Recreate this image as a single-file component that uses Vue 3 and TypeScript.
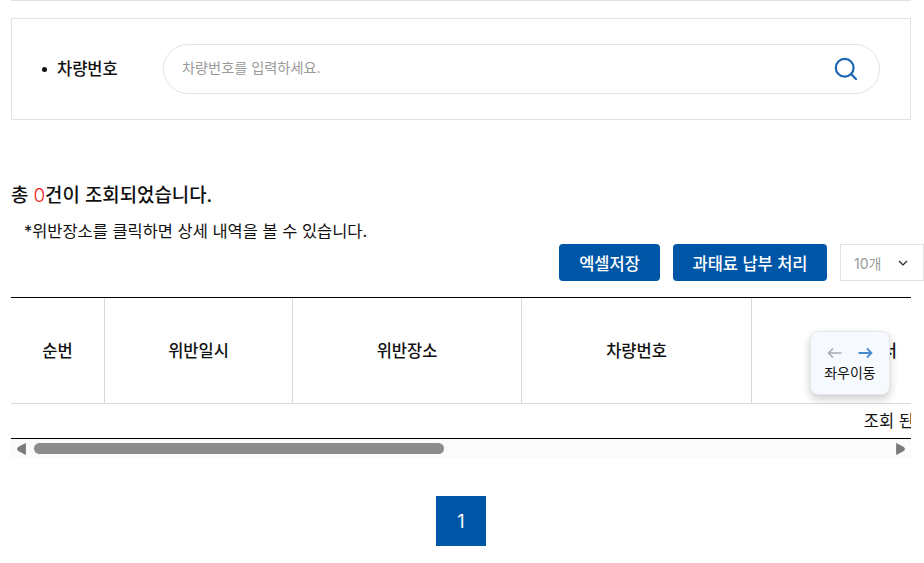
<script setup lang="ts">
const cols = [
  { label: '순번', w: 94 },
  { label: '위반일시', w: 188 },
  { label: '위반장소', w: 229 },
  { label: '차량번호', w: 230 },
  { label: '처리부서', w: 230 },
  { label: '위반내용', w: 230 },
  { label: '과태료', w: 230 },
  { label: '납부상태', w: 445 },
]
const total = cols.reduce((s, c) => s + c.w, 0)
</script>

<template>
  <div class="page">
    <div class="topline"></div>
    <section class="search">
      <div class="label"><span class="bullet"></span>차량번호</div>
      <div class="search-input">
        <span class="placeholder">차량번호를 입력하세요.</span>
        <svg class="search-icon" width="24" height="24" viewBox="0 0 24 24" fill="none">
          <circle cx="10.7" cy="10.7" r="8.9" stroke="#1b66b3" stroke-width="2.2" />
          <path d="M17.2 17.2L22 22" stroke="#1b66b3" stroke-width="2.2" stroke-linecap="round" />
        </svg>
      </div>
    </section>

    <h2 class="summary">총 <span class="count">0</span>건이 조회되었습니다.</h2>
    <p class="note">*위반장소를 클릭하면 상세 내역을 볼 수 있습니다.</p>

    <div class="actions">
      <button class="btn btn-excel">엑셀저장</button>
      <button class="btn btn-pay">과태료 납부 처리</button>
      <div class="select">
        <span>10개</span>
        <svg width="10" height="6" viewBox="0 0 10 6" fill="none">
          <path d="M1 1l4 4 4-4" stroke="#222" stroke-width="1.2" />
        </svg>
      </div>
    </div>

    <div class="table-area">
      <div class="table-clip">
        <div class="table" :style="{ width: total + 'px' }">
          <div class="head">
            <div v-for="c in cols" :key="c.label" class="th" :style="{ width: c.w + 'px' }">{{ c.label }}</div>
          </div>
          <div class="empty">조회 된 내역이 없습니다.</div>
        </div>
      </div>
      <div class="scrollbar">
        <svg width="9" height="12" viewBox="0 0 9 12"><path d="M8.5 0.5V11.5L1 7.5Q0 6 1 4.5Z" fill="#7b7b7b" stroke="#7b7b7b" stroke-width="0.8" stroke-linejoin="round" /></svg>
        <span class="thumb"></span>
        <svg class="arrow-right" width="9" height="12" viewBox="0 0 9 12"><path d="M0.5 0.5V11.5L8 7.5Q9 6 8 4.5Z" fill="#7b7b7b" stroke="#7b7b7b" stroke-width="0.8" stroke-linejoin="round" /></svg>
      </div>
      <div class="hint">
        <div class="hint-arrows">
          <svg width="15" height="12" viewBox="0 0 15 12" fill="none">
            <path d="M14.5 6H1.5M6 1.5L1.5 6 6 10.5" stroke="#a9adb3" stroke-width="1.6" />
          </svg>
          <svg width="15" height="12" viewBox="0 0 15 12" fill="none">
            <path d="M0.5 6h13M9 1.5L13.5 6 9 10.5" stroke="#4a8ad0" stroke-width="1.8" />
          </svg>
        </div>
        <span class="hint-text">좌우이동</span>
      </div>
    </div>

    <nav class="pager"><span class="page-current">1</span></nav>
  </div>
</template>

<style>
html, body { margin: 0; background: #fff; overflow: hidden; }
</style>

<style scoped>
.page {
  width: 924px;
  height: 563px;
  overflow: hidden;
  font-family: Inter, "Noto Sans CJK KR", sans-serif;
  color: #111;
  box-sizing: border-box;
}
.topline { height: 1px; margin: 0 13px 0 11px; background: #e2e2e2; }
.search {
  margin: 17px 13px 0 11px;
  height: 102px;
  box-sizing: border-box;
  border: 1px solid #e2e2e2;
  display: flex;
  align-items: center;
}
.label {
  width: 151px;
  box-sizing: border-box;
  padding-left: 30px;
  display: flex;
  align-items: center;
  font-size: 16.5px;
  font-weight: 500;
  line-height: 24px;
  color: #111;
  margin-top: -1px;
}
.bullet {
  width: 5px;
  height: 5px;
  border-radius: 50%;
  background: #111;
  margin-right: 10px;
  margin-top: 1px;
}
.search-input {
  width: 717px;
  height: 50px;
  box-sizing: border-box;
  border: 1px solid #e2e2e2;
  border-radius: 25px;
  display: flex;
  align-items: center;
  justify-content: space-between;
  padding: 0 21px 0 18px;
}
.placeholder { font-size: 14.2px; color: #9a9a9a; margin-top: -4px; }
.search-icon { display: block; }
.summary {
  margin: 63px 0 0 11px;
  font-size: 18.9px;
  line-height: 26px;
  font-weight: 500;
  color: #111;
}
.count { color: #f01818; font-weight: 300; }
.note {
  margin: 10px 0 0 24px;
  font-size: 16.45px;
  line-height: 24px;
  font-weight: 400;
  color: #111;
}
.actions {
  display: flex;
  justify-content: flex-end;
  align-items: center;
  margin-top: 1px;
  height: 37px;
}
.btn {
  height: 37px;
  border: 0;
  border-radius: 4px;
  background: #0056a6;
  color: #fff;
  font: inherit;
  font-size: 16.5px;
  font-weight: 500;
  padding: 0;
}
.btn-excel { width: 101px; margin-right: 13px; }
.btn-pay { width: 154px; margin-right: 13px; }
.select {
  width: 84px;
  height: 37px;
  box-sizing: border-box;
  border: 1px solid #e2e2e2;
  display: flex;
  align-items: center;
  justify-content: space-between;
  padding: 0 15px 0 13px;
  font-size: 14px;
  color: #9a9a9a;
}
.table-area { position: relative; margin: 16px 13px 0 11px; }
.table-clip { overflow: hidden; border-bottom: 1px solid #000; }
.table { border-top: 1px solid #000; }
.head { display: flex; height: 105px; border-bottom: 1px solid #d9d9d9; }
.th {
  flex: none;
  box-sizing: border-box;
  border-right: 1px solid #d9d9d9;
  display: flex;
  align-items: center;
  justify-content: center;
  font-size: 16.5px;
  font-weight: 500;
  color: #111;
  padding-bottom: 2px;
}
.empty {
  height: 34px;
  line-height: 34px;
  text-align: center;
  font-size: 16.5px;
  color: #111;
}
.scrollbar {
  height: 19px;
  background: #fbfbfb;
  display: flex;
  align-items: center;
  padding: 0 6px 0 6px;
}
.thumb {
  width: 410px;
  height: 11px;
  border-radius: 5.5px;
  background: #8c8c8c;
  margin-left: 8px;
}
.arrow-right { margin-left: auto; }
.hint {
  position: absolute;
  left: 799px;
  top: 34px;
  width: 80px;
  height: 64px;
  box-sizing: border-box;
  border: 1px solid #e4e6ea;
  border-radius: 8px;
  background: #f6f9fd;
  box-shadow: 0 4px 8px rgba(0, 0, 0, 0.2);
  display: flex;
  flex-direction: column;
  align-items: center;
  padding-top: 15px;
}
.hint-arrows { display: flex; gap: 16px; height: 12px; }
.hint-text { font-size: 14px; line-height: 18px; margin-top: 5px; color: #111; font-weight: 400; }
.pager { display: flex; justify-content: center; margin-top: 38px; padding-right: 2px; }
.page-current {
  width: 50px;
  height: 50px;
  background: #0056a6;
  color: #fff;
  display: flex;
  align-items: center;
  justify-content: center;
  font-size: 18px;
  font-weight: 400;
}
</style>
